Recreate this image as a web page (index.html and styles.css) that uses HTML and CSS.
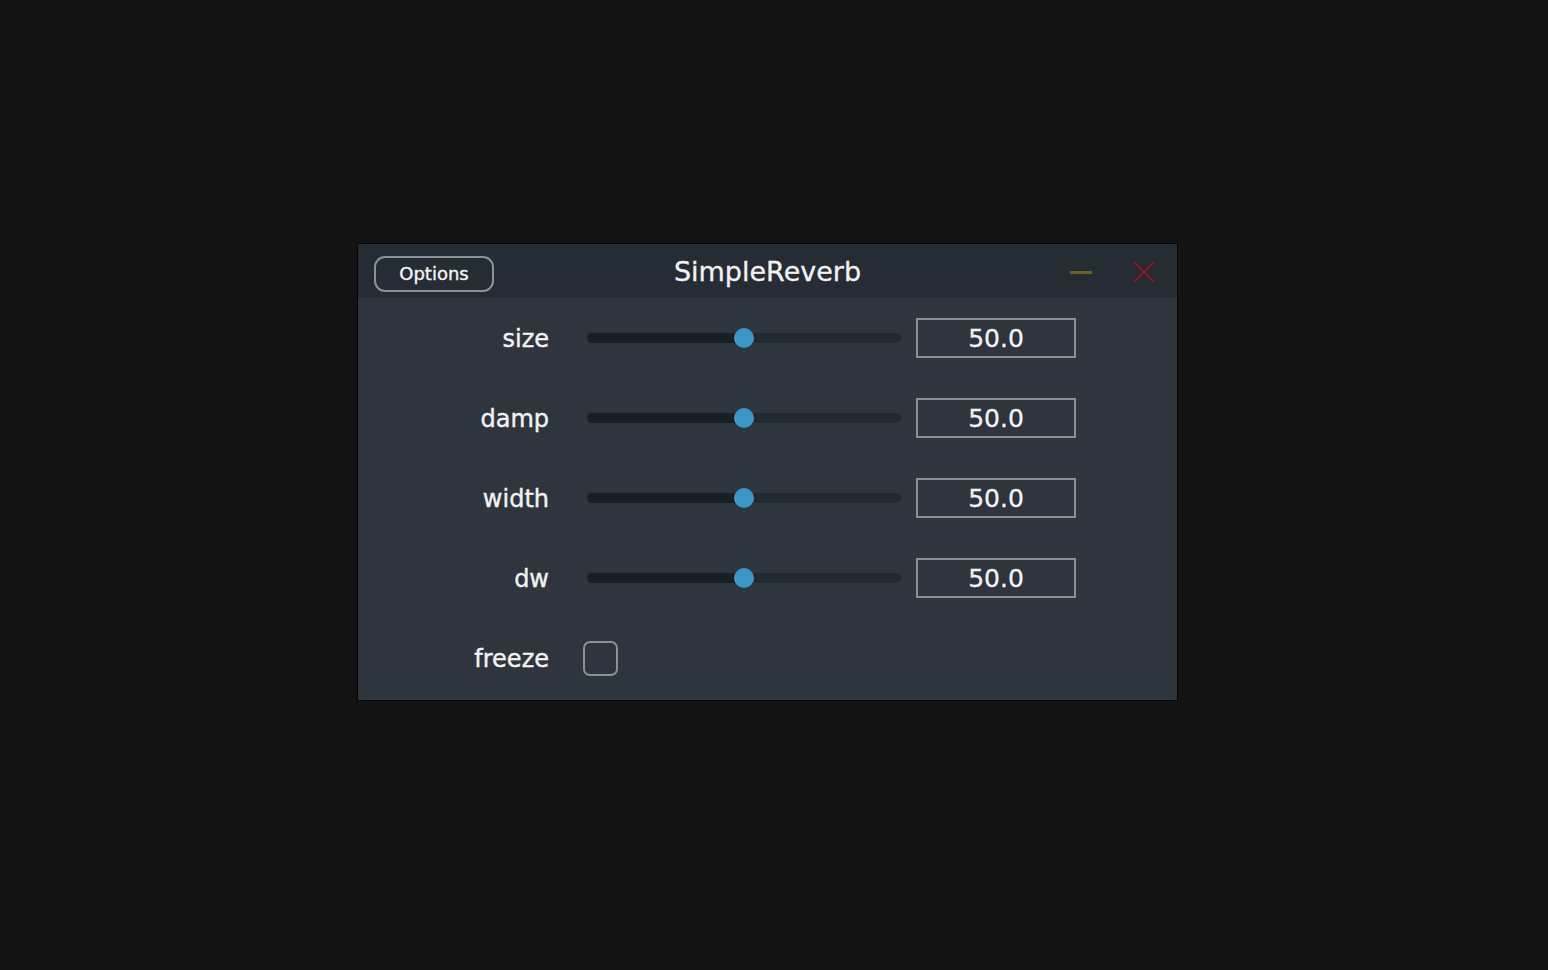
FILE: index.html
```html
<!DOCTYPE html>
<html>
<head>
<meta charset="utf-8">
<link rel="stylesheet" href="styles.css">
</head>
<body>
<div class="stage">
  <div class="window">
    <div class="titlebar">
      <button class="options">Options</button>
      <div class="title">SimpleReverb</div>
      <div class="controls">
        <span class="minimize"></span>
        <svg class="close" width="22" height="22" viewBox="0 0 22 22"><path d="M1 1 L21 21 M21 1 L1 21" stroke="#7b1d26" stroke-width="2.4" fill="none"/></svg>
      </div>
    </div>
    <div class="body">
      <div class="row">
        <div class="label">size</div>
        <div class="slider"><div class="fill" style="width:50%"></div><div class="thumb" style="left:50%"></div></div>
        <div class="value">50.0</div>
      </div>
      <div class="row">
        <div class="label">damp</div>
        <div class="slider"><div class="fill" style="width:50%"></div><div class="thumb" style="left:50%"></div></div>
        <div class="value">50.0</div>
      </div>
      <div class="row">
        <div class="label">width</div>
        <div class="slider"><div class="fill" style="width:50%"></div><div class="thumb" style="left:50%"></div></div>
        <div class="value">50.0</div>
      </div>
      <div class="row">
        <div class="label">dw</div>
        <div class="slider"><div class="fill" style="width:50%"></div><div class="thumb" style="left:50%"></div></div>
        <div class="value">50.0</div>
      </div>
      <div class="row">
        <div class="label">freeze</div>
        <div class="checkcell"><div class="checkbox"></div></div>
      </div>
    </div>
  </div>
</div>
</body>
</html>
```
FILE: styles.css
```css
html, body {
  margin: 0;
  padding: 0;
  background: #131313;
  font-family: "DejaVu Sans", "Liberation Sans", sans-serif;
  color: #f2f2f2;
}
.stage {
  width: 1548px;
  height: 970px;
  padding-top: 243px;
  padding-left: 357px;
  box-sizing: border-box;
}
.window {
  width: 821px;
  border: 1px solid #060606;
  box-sizing: border-box;
  background: #2e353d;
}
.titlebar {
  height: 54px;
  background: #262c33;
  display: flex;
  align-items: center;
  position: relative;
}
.options {
  margin-left: 16px;
  width: 120px;
  height: 36px;
  margin-top: 6px;
  box-sizing: border-box;
  border: 2px solid #8b9196;
  border-radius: 11px;
  background: transparent;
  color: #f4f4f4;
  font-family: "DejaVu Sans", sans-serif;
  font-size: 18px;
  -webkit-text-stroke: 0.35px #f4f4f4;
  padding: 0;
  line-height: 30px;
}
.title {
  position: absolute;
  left: 0;
  right: 0;
  top: 0;
  height: 54px;
  line-height: 56px;
  text-align: center;
  font-size: 27px;
  -webkit-text-stroke: 0.3px #f2f2f2;
  pointer-events: none;
}
.controls {
  margin-left: auto;
  display: flex;
  align-items: center;
  gap: 41px;
  margin-right: 22px;
  margin-top: 2px;
}
.minimize {
  display: block;
  width: 22px;
  height: 3px;
  background: #6e6020;
}
.close {
  display: block;
}
.body {
  display: flex;
  flex-direction: column;
  padding-bottom: 2px;
}
.row {
  height: 80px;
  display: grid;
  grid-template-columns: 191px 314px 160px;
  align-items: center;
}
.label {
  text-align: right;
  font-size: 24px;
  line-height: 1;
  padding-top: 2px;
  -webkit-text-stroke: 0.4px #f2f2f2;
}
.slider {
  margin-left: 38px;
  width: 314px;
  height: 10px;
  border-radius: 5px;
  background: #222a30;
  position: relative;
}
.fill {
  height: 10px;
  border-radius: 5px 0 0 5px;
  background: #191e22;
}
.thumb {
  position: absolute;
  top: 50%;
  width: 20px;
  height: 20px;
  margin-left: -10px;
  margin-top: -10px;
  border-radius: 50%;
  background: #3a97c6;
}
.value {
  margin-left: 53px;
  width: 160px;
  height: 40px;
  box-sizing: border-box;
  border: 2px solid #8b9196;
  text-align: center;
  font-size: 25px;
  line-height: 38px;
  -webkit-text-stroke: 0.3px #f2f2f2;
}
.checkcell {
  padding-left: 34px;
  display: flex;
  align-items: center;
}
.checkbox {
  width: 35px;
  height: 35px;
  box-sizing: border-box;
  border: 2px solid #8b9196;
  border-radius: 7px;
}
```
